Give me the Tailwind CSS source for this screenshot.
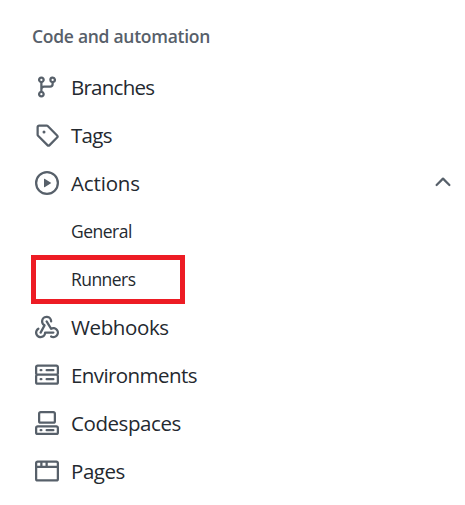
<!DOCTYPE html>
<html lang="en"><head><meta charset="utf-8"><title>Settings</title>
<script src="https://cdn.jsdelivr.net/npm/@tailwindcss/browser@4"></script></head>
<body class="bg-white font-['Open_Sans','Noto_Sans',sans-serif] text-[#24292f]">
<nav class="w-[465px] h-[505px] overflow-hidden pt-[10px]">
<h2 class="h-[53px] pl-8 pt-[14px] text-[17.5px] leading-[24px] font-semibold text-[#57606a] tracking-[-0.28px]">Code and automation</h2>
<ul class="text-[20.5px]">
<li class="flex h-12 items-center pl-[35px]"><svg class="size-6 mr-3 fill-[#57606a]" viewBox="0 0 16 16"><path d="M9.5 3.25a2.25 2.25 0 1 1 3 2.122V6A2.5 2.5 0 0 1 10 8.5H6a1 1 0 0 0-1 1v1.128a2.251 2.251 0 1 1-1.5 0V5.372a2.25 2.25 0 1 1 1.5 0v1.836A2.493 2.493 0 0 1 6 7h4a1 1 0 0 0 1-1v-.628A2.25 2.25 0 0 1 9.5 3.25Zm-6 0a.75.75 0 1 0 1.5 0 .75.75 0 0 0-1.5 0Zm8.25-.75a.75.75 0 1 0 0 1.5.75.75 0 0 0 0-1.5ZM4.25 12a.75.75 0 1 0 0 1.5.75.75 0 0 0 0-1.5Z"/></svg><span class="leading-[30px] tracking-[-0.75px]">Branches</span></li>
<li class="flex h-12 items-center pl-[35px]"><svg class="size-6 mr-3 fill-[#57606a]" viewBox="0 0 16 16"><path d="M1 7.775V2.75C1 1.784 1.784 1 2.75 1h5.025c.464 0 .91.184 1.238.513l6.25 6.25a1.75 1.75 0 0 1 0 2.474l-5.026 5.026a1.75 1.75 0 0 1-2.474 0l-6.25-6.25A1.752 1.752 0 0 1 1 7.775Zm1.5 0c0 .066.026.13.073.177l6.25 6.25a.25.25 0 0 0 .354 0l5.025-5.025a.25.25 0 0 0 0-.354l-6.25-6.25a.25.25 0 0 0-.177-.073H2.75a.25.25 0 0 0-.25.25ZM6 5a1 1 0 1 1 0 2 1 1 0 0 1 0-2Z"/></svg><span class="leading-[30px] tracking-[-0.7px]">Tags</span></li>
<li class="flex h-12 items-center pl-[35px] pr-[10px]"><svg class="size-6 mr-3 fill-[#57606a]" viewBox="0 0 16 16"><path d="M8 0a8 8 0 1 1 0 16A8 8 0 0 1 8 0ZM1.5 8a6.5 6.5 0 1 0 13 0 6.5 6.5 0 0 0-13 0Zm4.879-2.773 4.264 2.559a.25.25 0 0 1 0 .428l-4.264 2.559A.25.25 0 0 1 6 10.559V5.442a.25.25 0 0 1 .379-.215Z"/></svg><span class="leading-[30px] tracking-[-0.15px]">Actions</span><svg class="size-6 ml-auto mb-[2px] fill-[#57606a]" viewBox="0 0 16 16"><path d="M3.22 10.53a.749.749 0 0 1 0-1.06l4.25-4.25a.749.749 0 0 1 1.06 0l4.25 4.25a.749.749 0 1 1-1.06 1.06L8 6.811 4.28 10.53a.749.749 0 0 1-1.06 0Z"/></svg></li>
<li class="flex h-12 items-center pl-[71px] text-[17.5px]"><span class="tracking-[-0.5px]">General</span></li>
<li class="flex h-12 items-center pl-[31px] text-[17.5px]"><div class="flex h-[49px] w-[154px] shrink-0 items-center border-5 border-[#ed1c24] pl-[35px]"><span class="tracking-[-0.55px]">Runners</span></div></li>
<li class="flex h-12 items-center pl-[35px]"><svg class="size-6 mr-3 fill-[#57606a]" viewBox="0 0 16 16"><path d="M5.5 4.25a2.25 2.25 0 0 1 4.5 0 .75.75 0 0 0 1.5 0 3.75 3.75 0 1 0-6.14 2.889l-2.272 4.258a.75.75 0 0 0 1.324.706L7 7.25a.75.75 0 0 0-.309-1.015A2.25 2.25 0 0 1 5.5 4.25Z"/><path d="M7.364 3.607a.75.75 0 0 1 1.03.257l2.608 4.349a3.75 3.75 0 1 1-.628 6.785.75.75 0 0 1 .752-1.299 2.25 2.25 0 1 0-.033-3.88.75.75 0 0 1-1.03-.256L7.107 4.636a.75.75 0 0 1 .257-1.03Z"/><path d="M2.9 8.776A.75.75 0 0 1 2.625 9.8 2.25 2.25 0 1 0 6 11.75a.75.75 0 0 1 .75-.751h5.5a.75.75 0 0 1 0 1.5H7.425a3.751 3.751 0 1 1-5.55-3.998.75.75 0 0 1 1.024.274Z"/></svg><span class="leading-[30px] tracking-[-0.38px]">Webhooks</span></li>
<li class="flex h-12 items-center pl-[35px]"><svg class="size-6 mr-3 fill-[#57606a]" viewBox="0 0 16 16"><path d="M1.75 1h12.5c.966 0 1.75.784 1.75 1.75v4c0 .372-.116.717-.314 1 .198.283.314.628.314 1v4a1.75 1.75 0 0 1-1.75 1.75H1.75A1.75 1.75 0 0 1 0 12.75v-4c0-.358.109-.707.314-1a1.739 1.739 0 0 1-.314-1v-4C0 1.784.784 1 1.75 1ZM1.5 2.75v4c0 .138.112.25.25.25h12.5a.25.25 0 0 0 .25-.25v-4a.25.25 0 0 0-.25-.25H1.75a.25.25 0 0 0-.25.25Zm.25 5.75a.25.25 0 0 0-.25.25v4c0 .138.112.25.25.25h12.5a.25.25 0 0 0 .25-.25v-4a.25.25 0 0 0-.25-.25ZM7 4.75A.75.75 0 0 1 7.75 4h4.5a.75.75 0 0 1 0 1.5h-4.5A.75.75 0 0 1 7 4.75ZM7.75 10h4.5a.75.75 0 0 1 0 1.5h-4.5a.75.75 0 0 1 0-1.5ZM3 4.75A.75.75 0 0 1 3.75 4h.5a.75.75 0 0 1 0 1.5h-.5A.75.75 0 0 1 3 4.75ZM3.75 10h.5a.75.75 0 0 1 0 1.5h-.5a.75.75 0 0 1 0-1.5Z"/></svg><span class="leading-[30px] tracking-[-0.58px]">Environments</span></li>
<li class="flex h-12 items-center pl-[35px]"><svg class="size-6 mr-3 fill-[#57606a]" viewBox="0 0 16 16"><path d="M0 11.25c0-.966.784-1.75 1.75-1.75h12.5c.966 0 1.75.784 1.75 1.75v3A1.75 1.75 0 0 1 14.25 16H1.75A1.75 1.75 0 0 1 0 14.25Zm2-9.5C2 .784 2.784 0 3.75 0h8.5C13.216 0 14 .784 14 1.75v5a1.75 1.75 0 0 1-1.75 1.75h-8.5A1.75 1.75 0 0 1 2 6.75Zm1.75-.25a.25.25 0 0 0-.25.25v5c0 .138.112.25.25.25h8.5a.25.25 0 0 0 .25-.25v-5a.25.25 0 0 0-.25-.25Zm-2 9.5a.25.25 0 0 0-.25.25v3c0 .138.112.25.25.25h12.5a.25.25 0 0 0 .25-.25v-3a.25.25 0 0 0-.25-.25Z"/><path d="M7 12.75a.75.75 0 0 1 .75-.75h4.5a.75.75 0 0 1 0 1.5h-4.5a.75.75 0 0 1-.75-.75Zm-4 0a.75.75 0 0 1 .75-.75h.5a.75.75 0 0 1 0 1.5h-.5a.75.75 0 0 1-.75-.75Z"/></svg><span class="leading-[30px] tracking-[-0.42px]">Codespaces</span></li>
<li class="flex h-12 items-center pl-[35px]"><svg class="size-6 mr-3 fill-[#57606a]" viewBox="0 0 16 16"><path d="M0 2.75C0 1.784.784 1 1.75 1h12.5c.966 0 1.75.784 1.75 1.75v10.5A1.75 1.75 0 0 1 14.25 15H1.75A1.75 1.75 0 0 1 0 13.25ZM14.5 6h-13v7.25c0 .138.112.25.25.25h12.5a.25.25 0 0 0 .25-.25Zm-6-3.5v2h6V2.75a.25.25 0 0 0-.25-.25ZM5 2.5v2h2v-2Zm-3.25 0a.25.25 0 0 0-.25.25V4.5h2v-2Z"/></svg><span class="leading-[30px] tracking-[-0.45px]">Pages</span></li>
</ul></nav></body></html>
